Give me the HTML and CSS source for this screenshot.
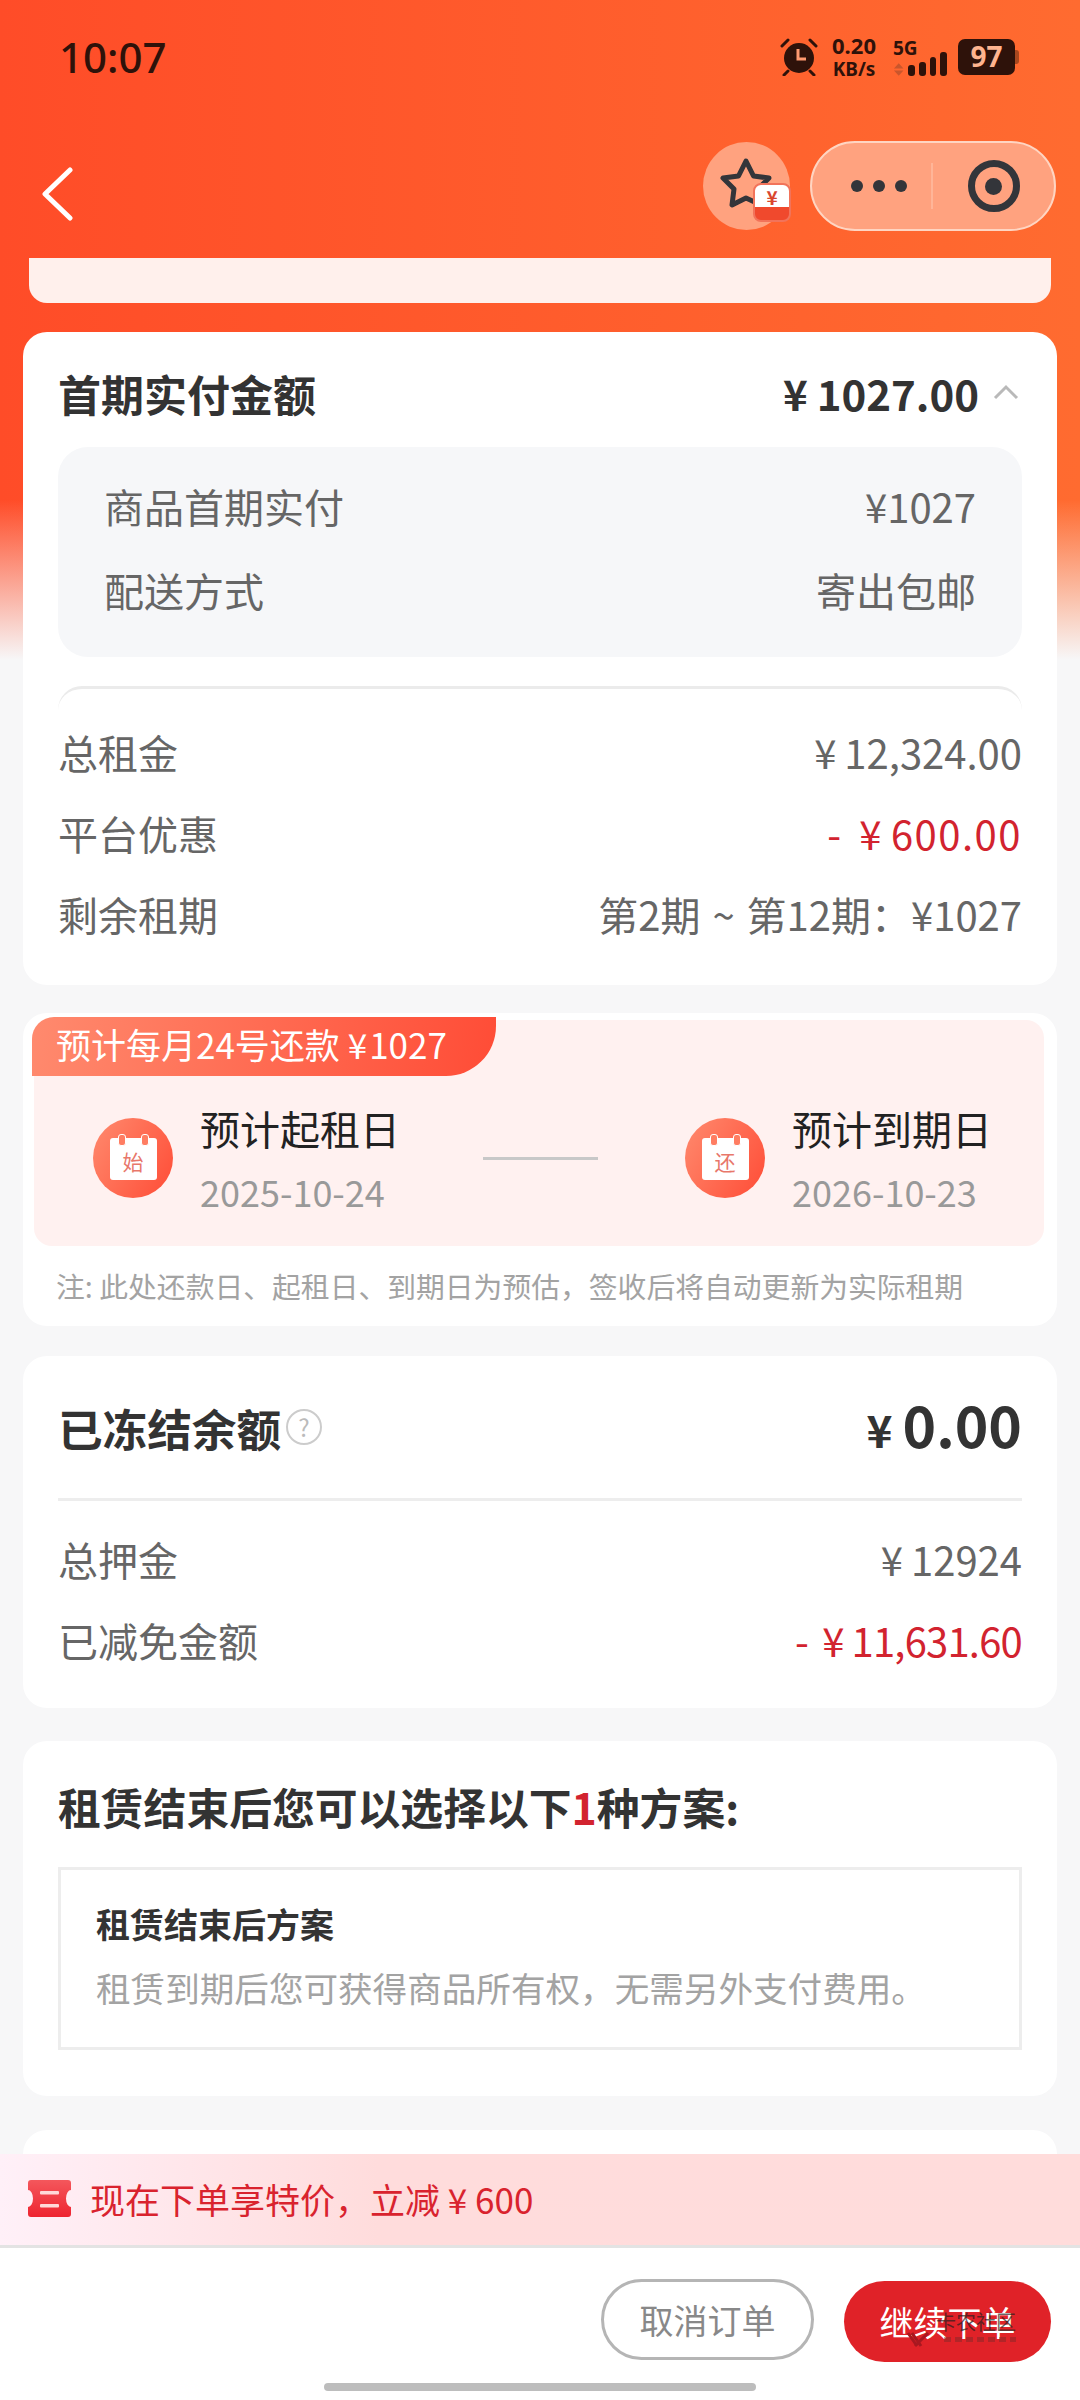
FILE: index.html
```html
<!DOCTYPE html>
<html>
<head>
  <meta charset="utf-8">
  <title>订单详情</title>
  <link rel="stylesheet" href="styles.css">
</head>
<body>
  <div class="page">
    <div class="status-bar">
      <span class="time">10:07</span>
      <div class="status-icons">
        <svg class="alarm" width="38" height="38" viewBox="0 0 38 38">
          <circle cx="19" cy="20" r="15" fill="#2e120a"/>
          <path d="M2 8 8 2M36 8 30 2M8 33l-4 4M30 33l4 4" stroke="#2e120a" stroke-width="3" stroke-linecap="round"/>
          <path d="M18 11v10h8" fill="none" stroke="#ff9a70" stroke-width="3"/>
        </svg>
        <div class="speed"><b>0.20</b><b class="unit">KB/s</b></div>
        <div class="signal">
          <b>5G</b>
          <div class="bars">
            <svg class="arrows" width="12" height="13" viewBox="0 0 12 13"><path d="M6 0l5 5.500H1zM6 13l5-5.500H1z" fill="#c9562c"/></svg>
            <i class="b1"></i><i class="b2"></i><i class="b3"></i><i class="b4"></i>
          </div>
        </div>
        <div class="battery">97</div><div class="battery-tip"></div>
      </div>
    </div>

    <div class="nav-bar">
      <svg class="back" width="34" height="54" viewBox="0 0 34 54"><path d="M30 3 5 27l25 24" fill="none" stroke="#fff" stroke-width="5" stroke-linecap="round" stroke-linejoin="round"/></svg>
      <div class="nav-right">
        <div class="fav">
          <svg width="56" height="56" viewBox="0 0 56 56"><path d="M28 5l7.500 15 15.500 2-11 11 3 16-15-7-14 7 2-16L5 22l15.500-2z" fill="none" stroke="#33353a" stroke-width="5" stroke-linejoin="round"/></svg>
          <div class="fav-badge"><span>¥</span></div>
        </div>
        <div class="capsule">
          <div class="dots"><i></i><i></i><i></i></div>
          <div class="capsule-line"></div>
          <div class="target"><i></i></div>
        </div>
      </div>
    </div>

    <div class="stub"></div>

    <div class="card first-card">
      <div class="head-row">
        <span class="head-title">首期实付金额</span>
        <span class="head-amount"><em>¥</em>1027.00
          <svg width="28" height="16" viewBox="0 0 28 16"><path d="M3 14 14 3l11 11" fill="none" stroke="#b9b9b9" stroke-width="3"/></svg>
        </span>
      </div>
      <div class="detail-box">
        <div class="row"><span>商品首期实付</span><span>¥1027</span></div>
        <div class="row"><span>配送方式</span><span>寄出包邮</span></div>
      </div>
      <div class="curve-line"></div>
      <div class="row plain"><span>总租金</span><span><em>¥</em>12,324.00</span></div>
      <div class="row plain"><span>平台优惠</span><span class="red wide">- <em>¥</em>600.00</span></div>
      <div class="row plain"><span>剩余租期</span><span class="term">第2期 ~ 第12期：¥1027</span></div>
    </div>

    <div class="card plan-card">
      <div class="plan-box">
        <div class="plan-tag">预计每月24号还款 <em>¥</em>1027</div>
        <div class="plan-dates">
          <div class="date-item">
            <div class="date-icon"><div class="cal"><span>始</span></div></div>
            <div class="date-text"><div class="date-label">预计起租日</div><div class="date-value">2025-10-24</div></div>
          </div>
          <div class="date-line"></div>
          <div class="date-item">
            <div class="date-icon"><div class="cal"><span>还</span></div></div>
            <div class="date-text"><div class="date-label">预计到期日</div><div class="date-value">2026-10-23</div></div>
          </div>
        </div>
      </div>
      <div class="plan-note">注: 此处还款日、起租日、到期日为预估，签收后将自动更新为实际租期</div>
    </div>

    <div class="card frozen-card">
      <div class="frozen-head">
        <span class="frozen-title">已冻结余额<i class="help">?</i></span>
        <span class="frozen-amount"><em>¥</em>0.00</span>
      </div>
      <div class="row plain"><span>总押金</span><span><em>¥</em>12924</span></div>
      <div class="row plain"><span>已减免金额</span><span class="red narrow">- <em>¥</em>11,631.60</span></div>
    </div>

    <div class="card option-card">
      <div class="option-title">租赁结束后您可以选择以下<span class="red">1</span>种方案:</div>
      <div class="option-box">
        <div class="option-name">租赁结束后方案</div>
        <div class="option-desc">租赁到期后您可获得商品所有权，无需另外支付费用。</div>
      </div>
    </div>

    <div class="card next-card"></div>
  </div>

  <div class="bottom">
    <div class="promo">
      <svg width="43" height="37" viewBox="0 0 43 37">
        <defs>
          <linearGradient id="ticket" x1="0" y1="0" x2="0" y2="1">
            <stop offset="0" stop-color="#f4575c"/>
            <stop offset="1" stop-color="#ee2430"/>
          </linearGradient>
        </defs>
        <path d="M3 0h37a3 3 0 0 1 3 3v7a5 8.500 0 0 0 0 17v7a3 3 0 0 1-3 3H3a3 3 0 0 1-3-3v-7a5 8.500 0 0 0 0-17V3a3 3 0 0 1 3-3z" fill="url(#ticket)"/>
        <rect x="12" y="11" width="19" height="3.500" rx="1" fill="#ffd9d9"/>
        <rect x="12" y="24" width="19" height="3.500" rx="1" fill="#ffd9d9"/>
      </svg>
      <span>现在下单享特价，立减 <em>¥</em> 600</span>
    </div>
    <div class="actions">
      <div class="btn btn-cancel">取消订单</div>
      <div class="btn btn-go">继续下单
        <svg class="mark-icon" width="24" height="16" viewBox="0 0 24 16"><path d="M2 1l9 13M22 1 9 14M6 1l9 13" fill="none" stroke="#a81820" stroke-width="3"/></svg>
        <div class="mark">卡农社区</div>
        <div class="mark-sub"></div>
      </div>
    </div>
    <div class="home-bar"></div>
  </div>
</body>
</html>
```

FILE: styles.css
```css
* {
  box-sizing: border-box;
}

html, body {
  margin: 0;
  height: 2400px;
  overflow: hidden;
}

body {
  font-family: "Noto Sans CJK SC", "Noto Sans", sans-serif;
  background: #f7f7f8;
  color: #333;
  position: relative;
}

em {
  font-style: normal;
}

.page {
  height: 2400px;
  padding: 0 23px;
  background:
    linear-gradient(to bottom, rgba(247, 247, 248, 0) 500px, #f7f7f8 660px),
    linear-gradient(to right, #ff4c28, #ff6b30);
}

.status-bar {
  height: 116px;
  margin: 0 -23px;
  padding: 32px 61px 0 59px;
  display: flex;
  justify-content: space-between;
  color: #2e120a;
}

.time {
  font-family: "Noto Sans", sans-serif;
  font-size: 42px;
  font-weight: 500;
  line-height: 50px;
}

.status-icons {
  display: flex;
  align-items: flex-start;
  padding-top: 6px;
}

.alarm {
  margin-right: 13px;
}

.speed {
  width: 46px;
  margin-top: -5px;
  margin-right: 16px;
  display: flex;
  flex-direction: column;
  align-items: center;
  font-family: "Noto Sans", sans-serif;
  font-size: 22px;
  line-height: 24px;
}

.speed .unit {
  font-size: 19px;
}

.signal {
  width: 54px;
  margin-right: 11px;
  font-family: "Noto Sans", sans-serif;
  font-size: 19px;
  line-height: 20px;
}

.bars {
  display: flex;
  align-items: flex-end;
  gap: 4px;
  height: 24px;
  margin-top: -6px;
}

.arrows {
  margin-right: auto;
}

.bars i {
  width: 7px;
  background: #2e120a;
  border-radius: 3px;
}

.b1 { height: 11px; }
.b2 { height: 14px; }
.b3 { height: 19px; }
.b4 { height: 24px; }

.battery {
  width: 57px;
  height: 36px;
  margin-top: 1px;
  background: #2e120a;
  border-radius: 7px;
  color: #ffb48f;
  font-family: "Noto Sans", sans-serif;
  font-size: 28px;
  font-weight: 700;
  line-height: 35px;
  text-align: center;
}

.battery-tip {
  width: 4px;
  height: 14px;
  margin-top: 12px;
  background: #a8481f;
  border-radius: 0 3px 3px 0;
}

.nav-bar {
  height: 142px;
  margin: 0 -23px;
  padding: 0 24px 0 40px;
  display: flex;
  justify-content: space-between;
  align-items: flex-start;
}

.back {
  margin-top: 51px;
}

.nav-right {
  display: flex;
  gap: 20px;
  padding-top: 25px;
}

.fav {
  width: 87px;
  height: 88px;
  margin-top: 1px;
  border-radius: 50%;
  background: #ffa27f;
  position: relative;
  padding: 14px 0 0 15px;
}

.fav-badge {
  position: absolute;
  left: 50px;
  top: 41px;
  width: 38px;
  height: 39px;
  border-radius: 8px;
  background: linear-gradient(to bottom, #fff 62%, #f0492d 62%);
  border: 2px solid #f2735a;
  color: #d9462e;
  font-size: 19px;
  font-weight: 700;
  line-height: 24px;
  text-align: center;
}

.capsule {
  width: 246px;
  height: 90px;
  border-radius: 45px;
  border: 2px solid #ffd5c2;
  background: #ffa27f;
  display: flex;
  align-items: center;
}

.dots {
  flex: 1;
  display: flex;
  justify-content: center;
  gap: 10px;
  padding-left: 14px;
}

.dots i {
  width: 12px;
  height: 12px;
  border-radius: 50%;
  background: #33353a;
}

.capsule-line {
  width: 2px;
  height: 46px;
  background: #ffb598;
}

.target {
  width: 121px;
  display: flex;
  justify-content: center;
}

.target i {
  width: 52px;
  height: 52px;
  border: 7px solid #33353a;
  border-radius: 50%;
  display: flex;
  align-items: center;
  justify-content: center;
}

.target i::after {
  content: "";
  width: 17px;
  height: 17px;
  border-radius: 50%;
  background: #33353a;
}

.stub {
  height: 45px;
  margin: 0 6px;
  background: #fff0ec;
  border-radius: 0 0 18px 18px;
}

.card {
  background: #fff;
  border-radius: 24px;
  padding: 0 35px;
}

.first-card {
  margin-top: 29px;
  height: 653px;
}

.head-row {
  display: flex;
  justify-content: space-between;
  align-items: center;
  height: 115px;
  padding-top: 6px;
}

.head-title {
  font-size: 43px;
  font-weight: 700;
}

.head-amount {
  font-size: 42px;
  font-weight: 700;
  display: flex;
  align-items: center;
}

.head-amount em {
  margin-right: 9px;
}

.head-amount svg {
  margin-left: 13px;
  margin-top: -2px;
  margin-right: 2px;
}

.detail-box {
  height: 210px;
  background: #f6f7f9;
  border-radius: 30px;
  padding: 17px 46px 0;
}

.row {
  display: flex;
  justify-content: space-between;
  align-items: center;
  height: 84px;
  font-size: 40px;
  color: #666;
}

.row.plain {
  height: 81px;
}

.row.plain em {
  margin-right: 8px;
}

.row .red em {
  margin-left: 6px;
}

.wide {
  letter-spacing: 1.500px;
}

.narrow {
  letter-spacing: -0.800px;
}

.term {
  word-spacing: 3px;
}

.curve-line {
  height: 44px;
  margin-top: 29px;
  margin-bottom: -19px;
  border-top: 3px solid #ebebeb;
  border-radius: 24px 24px 0 0;
  background: #fff;
}

.red {
  color: #d2232f;
}

.plan-card {
  margin-top: 28px;
  height: 313px;
  padding: 7px 13px 0 11px;
}

.plan-box {
  height: 226px;
  background: #fff1f0;
  border-radius: 18px;
  position: relative;
}

.plan-tag {
  position: absolute;
  left: -2px;
  top: -3px;
  width: 464px;
  height: 59px;
  padding-left: 24px;
  background: linear-gradient(100deg, #ff8a6e, #ff4c36);
  border-radius: 22px 0 50px 0;
  color: #fff;
  font-size: 35px;
  line-height: 54px;
  white-space: nowrap;
}

.plan-tag em {
  margin-right: 2px;
}

.plan-dates {
  display: flex;
  align-items: center;
  justify-content: space-between;
  height: 100%;
  padding: 50px 52px 0 59px;
}

.date-item {
  display: flex;
  align-items: center;
  gap: 27px;
}

.date-icon {
  width: 80px;
  height: 80px;
  border-radius: 50%;
  background: linear-gradient(120deg, #ff8a6e, #ff4c36);
  display: flex;
  align-items: center;
  justify-content: center;
}

.cal {
  width: 47px;
  height: 42px;
  margin-top: 2px;
  background: #fff;
  border-radius: 3px;
  border-top: 8px solid #fff;
  color: #e8776a;
  font-size: 21px;
  line-height: 30px;
  text-align: center;
  position: relative;
}

.cal::before,
.cal::after {
  content: "";
  position: absolute;
  top: -12px;
  width: 6px;
  height: 10px;
  background: #ff7d62;
  border: 1.500px solid #fff;
  border-radius: 3px;
}

.cal::before { left: 8px; }
.cal::after { right: 8px; }

.date-text {
  margin-bottom: 3px;
}

.date-label {
  font-size: 40px;
  line-height: 56px;
  color: #222;
}

.date-value {
  margin-top: 13px;
  font-size: 36px;
  line-height: 44px;
  color: #999;
}

.date-line {
  width: 115px;
  height: 3px;
  background: #c8c8c8;
  margin-left: -5px;
}

.plan-note {
  padding: 20px 0 0 22px;
  font-size: 28.800px;
  line-height: 40px;
  color: #a3a3a3;
}

.frozen-card {
  margin-top: 30px;
  height: 352px;
}

.frozen-head {
  height: 145px;
  display: flex;
  justify-content: space-between;
  align-items: center;
  border-bottom: 3px solid #ededed;
  margin-bottom: 17px;
}

.frozen-title {
  font-size: 44.600px;
  font-weight: 700;
  display: flex;
  align-items: center;
}

.help {
  width: 36px;
  height: 36px;
  margin-left: 5px;
  border: 2px solid #ccc;
  border-radius: 50%;
  color: #bbb;
  font-size: 24px;
  font-style: normal;
  font-weight: 400;
  line-height: 31px;
  text-align: center;
}

.frozen-amount {
  font-size: 57px;
  font-weight: 700;
  margin-top: -8px;
}

.frozen-amount em {
  font-size: 44px;
  margin-right: 10px;
}

.option-card {
  margin-top: 33px;
  height: 355px;
}

.option-title {
  padding-top: 37px;
  font-size: 42.800px;
  line-height: 56px;
  font-weight: 700;
}

.option-box {
  height: 183px;
  margin-top: 33px;
  border: 3px solid #ededed;
  padding: 31px 35px 0;
}

.option-name {
  font-size: 34px;
  line-height: 46px;
  font-weight: 700;
}

.option-desc {
  margin-top: 16px;
  font-size: 34.600px;
  line-height: 48px;
  color: #a3a3a3;
  white-space: nowrap;
}

.next-card {
  margin-top: 34px;
  height: 200px;
}

.bottom {
  position: absolute;
  left: 0;
  right: 0;
  bottom: 0;
}

.promo {
  height: 94px;
  padding: 0 0 3px 28px;
  display: flex;
  align-items: center;
  gap: 19px;
  background: linear-gradient(to right, #fff0f8, #ffdcdc 35%, #ffdcdb);
  border-bottom: 3px solid #e3e3e3;
  color: #d9232e;
  font-size: 35px;
}

.actions {
  height: 152px;
  background: #fff;
  padding: 33px 29px 0 0;
  display: flex;
  justify-content: flex-end;
  align-items: flex-start;
  gap: 30px;
}

.btn {
  height: 81px;
  border-radius: 41px;
  font-size: 34px;
  display: flex;
  align-items: center;
  justify-content: center;
}

.btn-cancel {
  width: 213px;
  border: 3px solid #b5b5b5;
  color: #888;
  margin-top: -2px;
}

.btn-go {
  width: 207px;
  background: #e02228;
  color: #fff;
  position: relative;
}

.mark-icon {
  position: absolute;
  left: 62px;
  top: 51px;
}

.mark {
  position: absolute;
  left: 92px;
  top: 29px;
  color: rgba(40, 30, 30, 0.7);
  font-size: 20px;
  line-height: 24px;
  white-space: nowrap;
}

.mark-sub {
  position: absolute;
  left: 100px;
  top: 56px;
  width: 72px;
  height: 5px;
  background: repeating-linear-gradient(to right, rgba(120, 40, 40, 0.45) 0 7px, transparent 7px 11px);
}

.home-bar {
  position: absolute;
  left: 324px;
  bottom: 9px;
  width: 432px;
  height: 8px;
  border-radius: 4px;
  background: #bdbdbd;
}
```
